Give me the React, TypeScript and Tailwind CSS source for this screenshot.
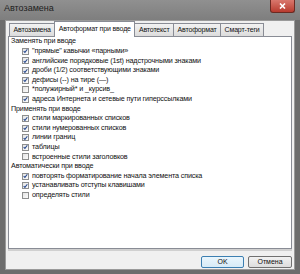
import React from 'react';

type Row = { kind: 'head'; text: string } | { kind: 'item'; text: string; on: boolean };

const rows: Row[] = [
  { kind: 'head', text: 'Заменять при вводе' },
  { kind: 'item', text: '"прямые" кавычки «парными»', on: true },
  { kind: 'item', text: 'английские порядковые (1st) надстрочными знаками', on: true },
  { kind: 'item', text: 'дроби (1/2) соответствующими знаками', on: true },
  { kind: 'item', text: 'дефисы (--) на тире (—)', on: true },
  { kind: 'item', text: '*полужирный* и _курсив_', on: false },
  { kind: 'item', text: 'адреса Интернета и сетевые пути гиперссылками', on: true },
  { kind: 'head', text: 'Применять при вводе' },
  { kind: 'item', text: 'стили маркированных списков', on: true },
  { kind: 'item', text: 'стили нумерованных списков', on: true },
  { kind: 'item', text: 'линии границ', on: true },
  { kind: 'item', text: 'таблицы', on: true },
  { kind: 'item', text: 'встроенные стили заголовков', on: false },
  { kind: 'head', text: 'Автоматически при вводе' },
  { kind: 'item', text: 'повторять форматирование начала элемента списка', on: true },
  { kind: 'item', text: 'устанавливать отступы клавишами', on: true },
  { kind: 'item', text: 'определять стили', on: false },
];

const tabs = ['Автозамена', 'Автоформат при вводе', 'Автотекст', 'Автоформат', 'Смарт-теги'];

const CheckBox = ({ on }: { on: boolean }) => (
  <span className="w-[7px] h-[7px] border border-[#8e8f8f] bg-gradient-to-br from-[#e4e4e4] to-[#fbfbfb] flex items-center justify-center shrink-0">
    {on && (
      <svg width="6" height="6" viewBox="0 0 6 6">
        <path d="M0.8 3.2 L2.3 4.7 L5.2 0.9" stroke="#2a4b8f" strokeWidth="1.3" fill="none" />
      </svg>
    )}
  </span>
);

const App = () => {
  return (
    <div
      className="w-[300px] h-[274px] bg-[#6d6d6d] flex flex-col overflow-hidden"
      style={{ fontFamily: '"Liberation Sans", Arial, sans-serif' }}
    >
      <div className="h-[20px] flex items-start justify-between bg-gradient-to-b from-[#909090] to-[#7e7e7e] shrink-0">
        <span className="text-[9px] text-[#1e1e1e] pl-[4px] pt-[3px] leading-[10px]">Автозамена</span>
        <div className="w-[25px] h-[13px] mr-[5px] bg-gradient-to-b from-[#d9776d] to-[#b83a2e] border border-[#6b2a22] border-t-0 rounded-b-[3px] flex items-center justify-center">
          <svg width="7" height="6" viewBox="0 0 7 6">
            <path d="M1 0.5 L6 5.5 M6 0.5 L1 5.5" stroke="#fff" strokeWidth="1.6" />
          </svg>
        </div>
      </div>

      <div className="flex-1 mx-[5px] mb-[4px] bg-[#f0f0f0] border border-[#9a9a9a] flex flex-col px-[2px]">
        <div className="flex items-end h-[15px] pl-[1px] shrink-0">
          {tabs.map((t, i) =>
            i === 1 ? (
              <div
                key={t}
                className="h-[16px] -mb-px -ml-px relative z-10 bg-white border border-[#898c95] border-b-0 px-[3.5px] text-[7px] tracking-[-0.15px] text-[#111] flex items-center whitespace-nowrap"
              >
                {t}
              </div>
            ) : (
              <div
                key={t}
                className="h-[13px] bg-gradient-to-b from-[#f2f2f2] to-[#dcdcdc] border border-[#898c95] border-b-0 px-[3.5px] text-[7px] tracking-[-0.15px] text-[#111] flex items-center whitespace-nowrap -ml-px first:ml-0"
              >
                {t}
              </div>
            )
          )}
        </div>

        <div className="h-[213px] bg-white border border-[#898c95] shadow-[0_2px_0_#d0d0d0] flex flex-col pl-[2px] shrink-0">
          {rows.map((r, i) =>
            r.kind === 'head' ? (
              <div key={i} className="h-[9.6px] flex items-center text-[7.2px] tracking-[-0.15px] text-[#111] whitespace-nowrap">
                {r.text}
              </div>
            ) : (
              <div key={i} className="h-[9.6px] flex items-center gap-[3px] pl-[11px] text-[7.2px] tracking-[-0.15px] text-[#111] whitespace-nowrap">
                <CheckBox on={r.on} />
                <span>{r.text}</span>
              </div>
            )
          )}
        </div>

        <div className="flex justify-end gap-[4px] mt-[7px]">
          <button className="w-[43px] h-[12px] rounded-[2px] border border-[#3c7fb1] bg-gradient-to-b from-[#eaf6fd] to-[#d7ebf7] text-[7px] text-[#111] flex items-center justify-center">
            OK
          </button>
          <button className="w-[44px] h-[12px] rounded-[2px] border border-[#707070] bg-gradient-to-b from-[#f2f2f2] to-[#dddddd] text-[7px] text-[#111] flex items-center justify-center">
            Отмена
          </button>
        </div>
      </div>
    </div>
  );
};

export default App;
